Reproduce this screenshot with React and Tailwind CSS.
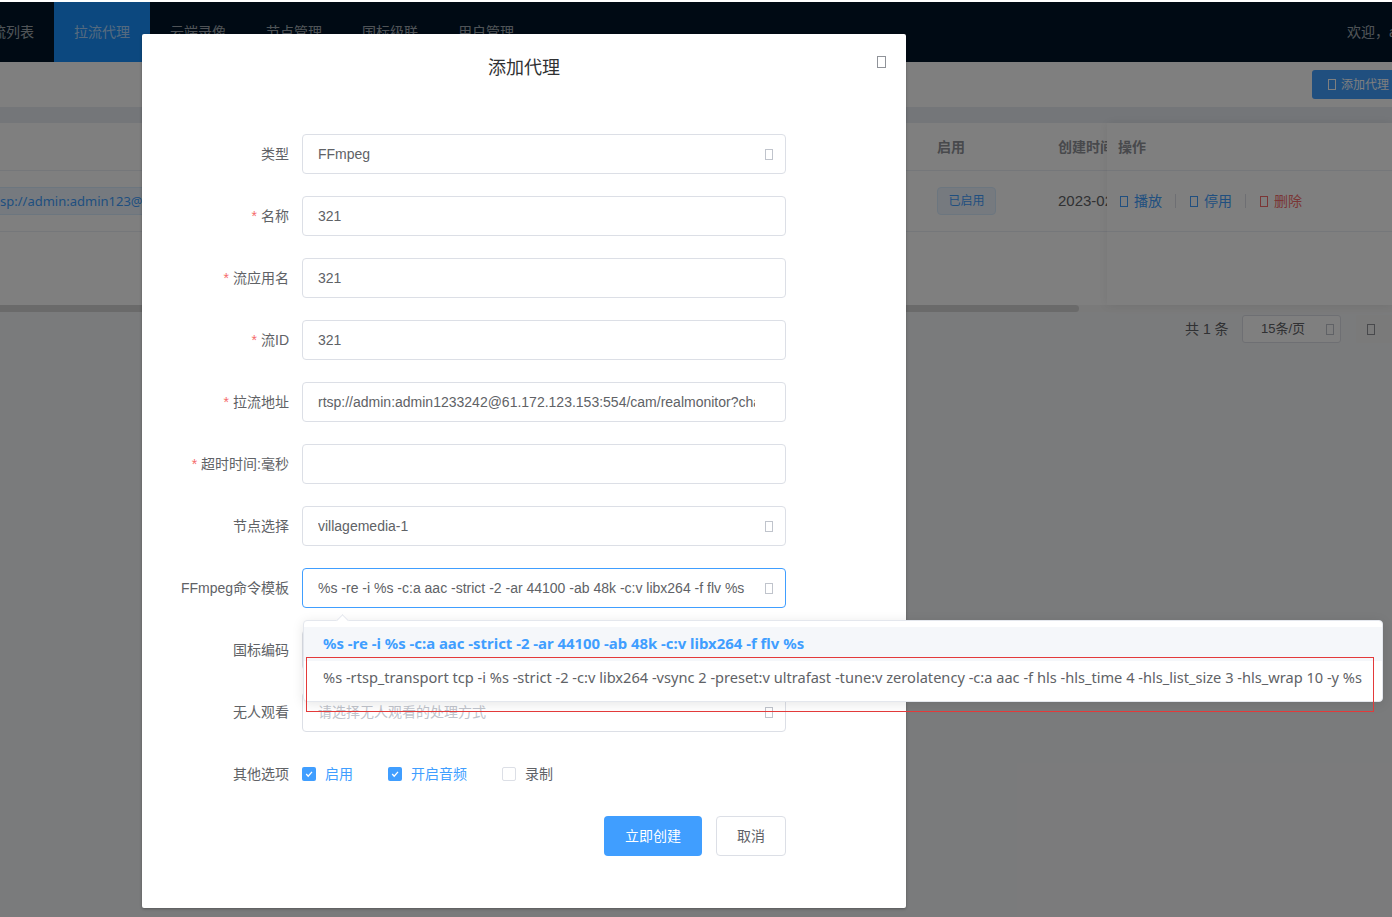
const sans = "font-['Liberation_Sans','Noto_Sans_CJK_SC',sans-serif]";

const Tofu = ({ className = "" }) => (
  <span className={`inline-block w-[8px] h-[11px] border border-current shrink-0 ${className}`} />
);

const navItems = ["推流列表", "拉流代理", "云端录像", "节点管理", "国标级联", "用户管理"];

const Check = ({ checked, label, className = "" }) => (
  <div className={`flex items-center ${className}`}>
    {checked ? (
      <span className="w-[14px] h-[14px] rounded-[2px] bg-[#409eff] flex items-center justify-center">
        <svg width="10" height="10" viewBox="0 0 10 10" fill="none">
          <path d="M2.2 5 L4.2 7.2 L8 2.8" stroke="#fff" strokeWidth="1.3" />
        </svg>
      </span>
    ) : (
      <span className="w-[14px] h-[14px] rounded-[2px] border border-[#dcdfe6] bg-white" />
    )}
    <span className={`ml-[9px] ${checked ? "text-[#409eff]" : "text-[#606266]"}`}>{label}</span>
  </div>
);

const Row = ({ label, required, children }) => (
  <div className="flex h-10 items-center">
    <label className="w-[160px] pr-[13px] text-right text-[#606266] text-sm whitespace-nowrap">
      {required && <span className="text-[#f56c6c] mr-[4px]">*</span>}
      {label}
    </label>
    {children}
  </div>
);

const Field = ({ value = "", placeholder, select, focused }) => (
  <div className="relative w-[484px] h-10">
    <input
      readOnly
      value={value}
      placeholder={placeholder}
      className={`w-full h-full rounded-[4px] border bg-white pl-[15px] pr-[30px] text-sm text-[#606266] outline-none placeholder:text-[#c0c4cc] ${
        focused ? "border-[#409eff]" : "border-[#dcdfe6]"
      }`}
    />
    {select && <Tofu className="absolute right-[13px] top-[15px] text-[#c0c4cc]" />}
  </div>
);

export default function App() {
  return (
    <div className={`relative w-[1392px] h-[917px] overflow-hidden bg-[#f5f6f8] pt-[2px] text-sm ${sans}`}>
      <div className="absolute top-0 inset-x-0 h-[2px] bg-white" />

      {/* header */}
      <div className="h-[60px] bg-[#001529] flex -ml-[42px] items-center text-[#ffffffa6]">
        {navItems.map((n, i) => (
          <div
            key={n}
            className={`h-full w-[96px] flex items-center justify-center ${i === 1 ? "bg-[#1890ff] text-[#ffffffa6]" : ""}`}
          >
            {n}
          </div>
        ))}
        <div className="flex-1" />
        <div className="w-[45px] whitespace-nowrap">欢迎，admin</div>
      </div>

      {/* toolbar */}
      <div className="h-[45px] bg-white flex justify-end">
        <button className="mt-[8px] h-[29px] w-[90px] -mr-[10px] shrink-0 rounded-[3px] bg-[#409eff] text-white text-xs flex items-center pl-[16px] whitespace-nowrap">
          <Tofu className="mr-[5px]" />
          添加代理
        </button>
      </div>

      <div className="h-[16px] bg-[#e9edf3]" />

      {/* table */}
      <div className="h-[182px] bg-white flex">
        <div className="w-[1107px] shrink-0">
          <div className="h-[48px] border-b border-[#ebeef5] flex items-center font-bold text-[#909399]">
            <div className="w-[937px]" />
            <div className="w-[121px]">启用</div>
            <div className="w-[49px] overflow-hidden whitespace-nowrap">创建时间</div>
          </div>
          <div className="h-[61px] border-b border-[#ebeef5] flex items-center text-[#606266]">
            <div className="w-[142px] h-[28px] bg-[#ecf5ff] border-y border-[#d9ecff] text-[#409eff] font-['Noto_Sans'] text-[13px] leading-[26px] overflow-hidden whitespace-nowrap">
              sp://admin:admin123@61.172
            </div>
            <div className="w-[795px]" />
            <div className="w-[121px]">
              <span className="inline-flex w-[59px] h-[28px] items-center justify-center rounded-[4px] bg-[#ecf5ff] border border-[#d9ecff] text-[#409eff] text-xs">
                已启用
              </span>
            </div>
            <div className="w-[49px] overflow-hidden whitespace-nowrap text-[15px]">2023-02-10</div>
          </div>
        </div>
        <div className="relative flex-1 shadow-[0_0_10px_rgba(0,0,0,0.08)]">
          <div className="h-[48px] border-b border-[#ebeef5] flex items-center pl-[11px] font-bold text-[#909399]">操作</div>
          <div className="h-[61px] border-b border-[#ebeef5] flex items-center pl-[13px] text-[#409eff]">
            <Tofu className="mr-[6px]" />
            播放
            <span className="w-px h-[14px] bg-[#dcdfe6] mx-[13px]" />
            <span className="w-px" />
            <Tofu className="mr-[6px]" />
            停用
            <span className="w-px h-[14px] bg-[#dcdfe6] mx-[13px]" />
            <span className="w-px" />
            <Tofu className="mr-[6px] text-[#f56c6c]" />
            <span className="text-[#f56c6c]">删除</span>
          </div>
        </div>
      </div>

      {/* scrollbar */}
      <div className="h-[7px] bg-[#f4f4f4]">
        <div className="h-full w-[1079px] bg-[#d4d4d4] rounded-r-[4px]" />
      </div>

      {/* pager */}
      <div className="flex items-start h-[33px] pt-[3px] pl-[1185px] text-[14px] text-[#606266] whitespace-nowrap">
        <div className="w-[57px] shrink-0 leading-[28px]">共 1 条</div>
        <div className="w-[99px] h-[28px] shrink-0 rounded-[3px] border border-[#dcdfe6] bg-white flex items-center pl-[18px] text-[13px]">
          15条/页
          <Tofu className="ml-auto mr-[6px] w-[7px] h-[9px] text-[#c0c4cc]" />
        </div>
        <div className="ml-[15px] w-[40px] h-[28px] shrink-0 rounded-[2px] bg-[#f4f4f5] flex items-center pl-[11px]">
          <Tofu className="w-[7px] h-[9px] text-[#909399]" />
        </div>
      </div>

      {/* modal */}
      <div className="absolute inset-x-0 top-[2px] bottom-0 bg-black/50">
        <div className="relative ml-[142px] mt-[32px] w-[764px] h-[874px] bg-white rounded-[2px] shadow-[0_1px_3px_rgba(0,0,0,0.3)]">
          <div className="h-[100px] pt-[21px] text-center text-[18px] leading-[26px] text-[#303133]">添加代理</div>
          <Tofu className="absolute left-[735px] top-[22px] w-[9px] h-[12px] text-[#909399]" />

          <div className="flex flex-col gap-[22px]">
            <Row label="类型"><Field value="FFmpeg" select /></Row>
            <Row label="名称" required><Field value="321" /></Row>
            <Row label="流应用名" required><Field value="321" /></Row>
            <Row label="流ID" required><Field value="321" /></Row>
            <Row label="拉流地址" required>
              <Field value="rtsp://admin:admin1233242@61.172.123.153:554/cam/realmonitor?channel=1&subtype=0" />
            </Row>
            <Row label="超时时间:毫秒" required><Field /></Row>
            <Row label="节点选择"><Field value="villagemedia-1" select /></Row>
            <Row label="FFmpeg命令模板">
              <Field value="%s -re -i %s -c:a aac -strict -2 -ar 44100 -ab 48k -c:v libx264 -f flv %s" select focused />
            </Row>
            <Row label="国标编码"><Field /></Row>
            <Row label="无人观看"><Field placeholder="请选择无人观看的处理方式" select /></Row>
            <Row label="其他选项">
              <Check checked label="启用" className="w-[86px]" />
              <Check checked label="开启音频" className="w-[114px]" />
              <Check label="录制" />
            </Row>
            <div className="flex h-10 pl-[462px]">
              <button className="w-[98px] h-10 rounded-[4px] bg-[#409eff] text-white text-sm">立即创建</button>
              <button className="ml-[14px] w-[70px] h-10 rounded-[4px] border border-[#dcdfe6] bg-white text-[#606266] text-sm">取消</button>
            </div>
          </div>
        </div>

        {/* dropdown */}
        <div className="absolute left-[303px] top-[618px] w-[1080px] h-[82px] py-[6px] rounded-[4px] border border-[#e4e7ed] bg-white shadow-[0_2px_12px_rgba(0,0,0,0.1)] font-['Noto_Sans','Noto_Sans_CJK_SC',sans-serif] whitespace-nowrap">
          <span className="absolute left-[34px] -top-[5px] w-[9px] h-[9px] rotate-45 bg-white border-l border-t border-[#e4e7ed]" />
          <div className="h-[34px] px-[19px] leading-[32px] bg-[#f5f7fa] text-[#409eff] font-bold text-[14.9px]">
            %s -re -i %s -c:a aac -strict -2 -ar 44100 -ab 48k -c:v libx264 -f flv %s
          </div>
          <div className="h-[34px] px-[19px] leading-[32px] text-[#606266] text-[14.6px]">
            %s -rtsp_transport tcp -i %s -strict -2 -c:v libx264 -vsync 2 -preset:v ultrafast -tune:v zerolatency -c:a aac -f hls -hls_time 4 -hls_list_size 3 -hls_wrap 10 -y %s
          </div>
        </div>

        {/* red annotation */}
        <div className="absolute left-[306px] top-[655px] w-[1068px] h-[55px] border border-[#e33a3a] pointer-events-none" />
      </div>
    </div>
  );
}
